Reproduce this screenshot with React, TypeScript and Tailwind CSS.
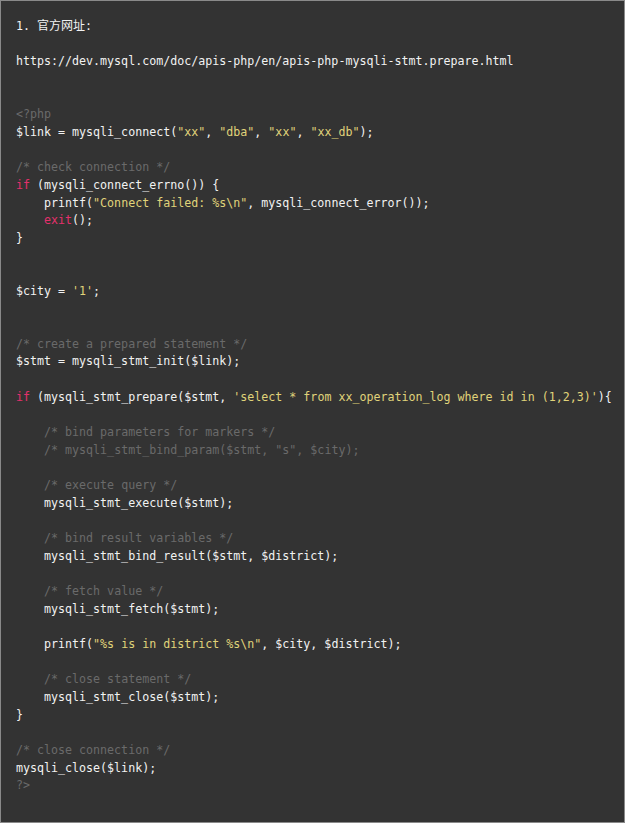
const C = ({ children }: { children: React.ReactNode }) => (
  <span className="text-[#6a6a6a]">{children}</span>
);
const S = ({ children }: { children: React.ReactNode }) => (
  <span className="text-[#e0d37a]">{children}</span>
);
const K = ({ children }: { children: React.ReactNode }) => (
  <span className="text-[#e3306b]">{children}</span>
);

export default function App() {
  return (
    <div className="bg-white min-h-screen">
      <div className="w-[625px] h-[823px] border border-[#8a8a8a] bg-[#333333] pt-[15px] pl-[15px] text-[#f2f2f2]">
        <pre className="font-['DejaVu_Sans_Mono','Noto_Sans_CJK_SC',monospace] text-[11.65px] leading-[17.65px] whitespace-pre">
          <div>
            1. <span className="text-[12px] font-['Noto_Sans_CJK_SC',sans-serif]">官方网址</span>:
          </div>
          <div>{" "}</div>
          <div>https://dev.mysql.com/doc/apis-php/en/apis-php-mysqli-stmt.prepare.html</div>
          <div>{" "}</div>
          <div>{" "}</div>
          <div><C>{"<?php"}</C></div>
          <div>$link = mysqli_connect(<S>"xx"</S>, <S>"dba"</S>, <S>"xx"</S>, <S>"xx_db"</S>);</div>
          <div>{" "}</div>
          <div><C>/* check connection */</C></div>
          <div><K>if</K> (mysqli_connect_errno()) {"{"}</div>
          <div>    printf(<S>"Connect failed: %s\n"</S>, mysqli_connect_error());</div>
          <div>    <K>exit</K>();</div>
          <div>{"}"}</div>
          <div>{" "}</div>
          <div>{" "}</div>
          <div>$city = <S>'1'</S>;</div>
          <div>{" "}</div>
          <div>{" "}</div>
          <div><C>/* create a prepared statement */</C></div>
          <div>$stmt = mysqli_stmt_init($link);</div>
          <div>{" "}</div>
          <div><K>if</K> (mysqli_stmt_prepare($stmt, <S>'select * from xx_operation_log where id in (1,2,3)'</S>{"){"}</div>
          <div>{" "}</div>
          <div>    <C>/* bind parameters for markers */</C></div>
          <div>    <C>/* mysqli_stmt_bind_param($stmt, "s", $city);</C></div>
          <div>{" "}</div>
          <div>    <C>/* execute query */</C></div>
          <div>    mysqli_stmt_execute($stmt);</div>
          <div>{" "}</div>
          <div>    <C>/* bind result variables */</C></div>
          <div>    mysqli_stmt_bind_result($stmt, $district);</div>
          <div>{" "}</div>
          <div>    <C>/* fetch value */</C></div>
          <div>    mysqli_stmt_fetch($stmt);</div>
          <div>{" "}</div>
          <div>    printf(<S>"%s is in district %s\n"</S>, $city, $district);</div>
          <div>{" "}</div>
          <div>    <C>/* close statement */</C></div>
          <div>    mysqli_stmt_close($stmt);</div>
          <div>{"}"}</div>
          <div>{" "}</div>
          <div><C>/* close connection */</C></div>
          <div>mysqli_close($link);</div>
          <div><C>?&gt;</C></div>
        </pre>
      </div>
    </div>
  );
}
